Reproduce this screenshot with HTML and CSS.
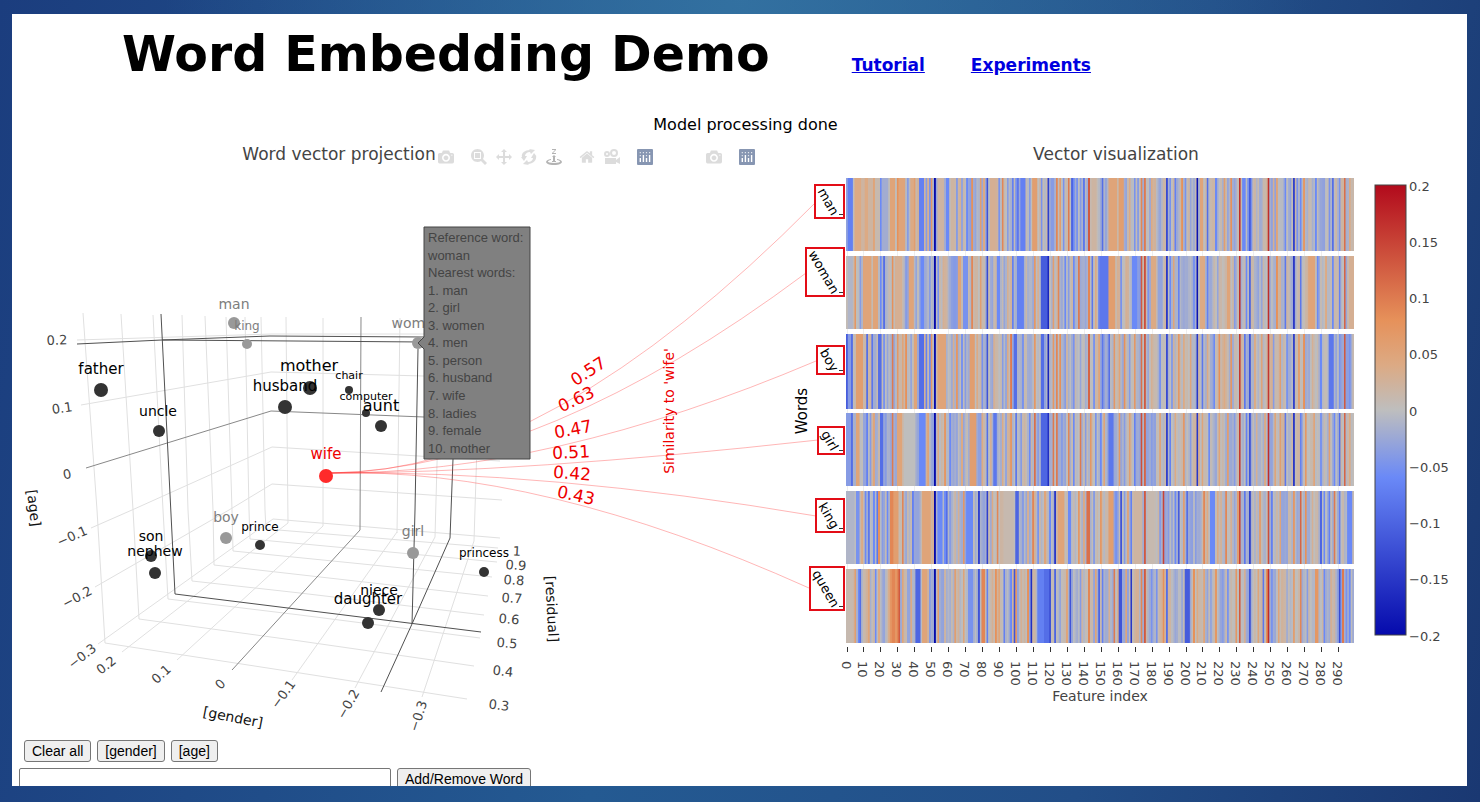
FILE: index.html
```html
<!DOCTYPE html>
<html lang="en">
<head>
<meta charset="utf-8">
<title>Word Embedding Demo</title>
<link rel="stylesheet" href="styles.css">
</head>
<body>
<main class="panel">
  <header class="header">
    <h1 class="title">Word Embedding Demo</h1>
    <nav class="nav">
      <a href="#tutorial">Tutorial</a>
      <a href="#experiments">Experiments</a>
    </nav>
  </header>
  <p class="status">Model processing done</p>

  <section class="stage">
    <svg class="plot" viewBox="12 138 1455 598" role="img" aria-label="Word vector projection and vector visualization">
      <defs>
        <linearGradient id="scale" x1="0" y1="1" x2="0" y2="0">
          <stop offset="0" stop-color="rgb(5,10,172)"/>
          <stop offset="0.35" stop-color="rgb(106,137,247)"/>
          <stop offset="0.5" stop-color="rgb(190,190,190)"/>
          <stop offset="0.6" stop-color="rgb(220,170,132)"/>
          <stop offset="0.7" stop-color="rgb(230,145,90)"/>
          <stop offset="1" stop-color="rgb(178,10,28)"/>
        </linearGradient>
      </defs>

      <text class="heading" x="339" y="160">Word vector projection</text>
      <text class="heading" x="1116" y="160">Vector visualization</text>

      <g class="grid">
        <path d="M83 313L97 510L105 643M121 314L133 510L139 619M153 315L163 510L168 599M182 315L188 510L192 581M205 316L213 510L214 565M226 317L232 510L233 551M245 317L249 510L250 539M261 317L265 510L266 529M286 317L288 523M323 318L323 526M400 318L397 533M441 318L435 537M481 318L474 541"/>
        <path d="M77 340L272 334L424 334M81 405L271 372L424 376M91 528L132 510L272 447L500 461M95 587L229 510L272 484L502 500M98 644L273 519L500 538"/>
        <path d="M105 643L300 673L467 699M139 619L300 641L474 666M168 599L300 615L480 638M192 581L300 593L484 615M214 565L488 596M233 551L492 577M250 539L497 562M266 529L498 548"/>
        <path d="M122 652L288 523M177 660L323 526M292 680L397 532M355 688L435 537M422 697L474 541"/>
      </g>
      <path class="zero" d="M86 468L271 411L424 417M361 317L360 530L232 670"/>
      <path class="axis" d="M161 314L175 594L481 632M77 344L162 340L270 336L424 337M162 340L424 342M418 349L415 510L412 624M453 459L450 538L412 624L381 692"/>

      <g class="tick" id="ticks3d"></g>
      <g class="name" id="axes3d"></g>
      <g id="points"></g>

      <g class="link">
        <path d="M331 473Q548 473 815 203"/>
        <path d="M331 473Q545 468 806 273"/>
        <path d="M331 473Q550 474 816 361"/>
        <path d="M331 473Q520 473 818 440"/>
        <path d="M331 473Q545 470 816 516"/>
        <path d="M331 473Q540 467 809 588"/>
      </g>
      <g id="scores"></g>
      <text class="score" transform="translate(674 411) rotate(-90)">Similarity to 'wife'</text>

      <g class="tip">
        <path d="M424 227H530V459H424V349L418 343L424 337Z"/>
        <text x="428" y="242">Reference word:</text>
        <text x="428" y="260">woman</text>
        <text x="428" y="277">Nearest words:</text>
        <text x="428" y="295">1. man</text>
        <text x="428" y="312">2. girl</text>
        <text x="428" y="330">3. women</text>
        <text x="428" y="347">4. men</text>
        <text x="428" y="365">5. person</text>
        <text x="428" y="382">6. husband</text>
        <text x="428" y="400">7. wife</text>
        <text x="428" y="418">8. ladies</text>
        <text x="428" y="435">9. female</text>
        <text x="428" y="453">10. mother</text>
      </g>

      <g id="heat"></g>
      <g id="labels"></g>
      <text class="words" transform="translate(807 411) rotate(-90)">Words</text>
      <text class="feature" x="1100" y="701">Feature index</text>
      <rect class="bar" x="1375" y="185" width="31" height="450"/>
      <g class="tick" id="barTicks"></g>
    </svg>

    <div class="modebar modebar-left">
      <div class="group"><button aria-label="Download plot"><svg viewBox="0 0 1000 1000"><use href="#camera"/></svg></button></div>
      <div class="group">
        <button aria-label="Zoom"><svg viewBox="0 0 1000 1000"><path transform="matrix(1 0 0 -1 0 850)" d="m1000-25l-250 251c40 63 63 138 63 218 0 224-182 406-407 406-224 0-406-182-406-406s183-406 407-406c80 0 155 22 218 62l250-250 125 125z m-812 250l0 438 437 0 0-438-437 0z m62 375l313 0 0-312-313 0 0 312z"/></svg></button>
        <button aria-label="Pan"><svg viewBox="0 0 1000 1000"><path transform="matrix(1 0 0 -1 0 850)" d="m1000 350l-187 188 0-125-250 0 0 250 125 0-188 187-187-187 125 0 0-250-250 0 0 125-188-188 186-187 0 125 252 0 0-250-125 0 187-188 188 188-125 0 0 250 250 0 0-126 187 188z"/></svg></button>
        <button aria-label="Orbital rotation"><svg viewBox="0 0 16 16"><path d="M1 8C0 4 4 1 9 1L8 0L14 1L10 5L9 3C6 3 4 5 4 7L6 7L3 12L0 8ZM15 7C16 11 12 15 7 15L8 16L2 15L6 11L7 13C10 13 12 11 12 9L10 9L13 4L16 8Z"/></svg></button>
        <button class="active" aria-label="Turntable rotation"><svg viewBox="0 0 16 16"><path d="M6 0H10V1L7 4H10V5H6V4L9 1H6ZM8 6L10 8H9V12H10V13H6V12H7V8H6ZM5 10V11C0 12 1 14 8 14S16 12 11 11V10C18 11 18 16 8 16S-2 11 5 10Z"/></svg></button>
      </div>
      <div class="group">
        <button aria-label="Reset camera"><svg viewBox="0 0 929 1000"><path transform="matrix(1 0 0 -1 0 850)" d="m786 296v-267q0-15-11-26t-25-10h-214v214h-143v-214h-214q-15 0-25 10t-11 26v267q0 1 0 2t0 2l321 264 321-264q1-1 1-4z m124 39l-34-41q-5-5-12-6h-2q-7 0-12 3l-386 322-386-322q-7-4-13-4-7 2-12 7l-35 41q-4 5-3 13t6 12l401 334q18 15 42 15t43-15l136-114v109q0 8 5 13t13 5h107q8 0 13-5t5-13v-227l122-102q5-5 6-12t-4-13z"/></svg></button>
        <button aria-label="Reset camera to last save"><svg viewBox="0 0 16 16"><path fill-rule="evenodd" d="M0 5A3 3 0 0 1 6 5A3 3 0 0 1 0 5ZM2 5A1 1 0 0 0 4 5A1 1 0 0 0 2 5ZM6 4A4 4 0 0 1 14 4A4 4 0 0 1 6 4ZM8 4A2 2 0 0 0 12 4A2 2 0 0 0 8 4ZM1 9H12V11L16 8V15L12 13V15H1Z"/></svg></button>
      </div>
      <div class="group"><button class="logo" aria-label="Produced with Plotly"><svg viewBox="0 0 16 16"><use href="#bars"/></svg></button></div>
    </div>
    <div class="modebar modebar-right">
      <div class="group"><button aria-label="Download heatmap"><svg viewBox="0 0 1000 1000"><use href="#camera"/></svg></button></div>
      <div class="group"><button class="logo" aria-label="Produced with Plotly"><svg viewBox="0 0 16 16"><use href="#bars"/></svg></button></div>
    </div>
    <svg class="symbols" aria-hidden="true">
      <defs>
        <path id="camera" transform="matrix(1 0 0 -1 0 850)" d="m500 450c-83 0-150-67-150-150 0-83 67-150 150-150 83 0 150 67 150 150 0 83-67 150-150 150z m400 150h-120c-16 0-34 13-39 29l-31 93c-6 15-23 28-40 28h-340c-16 0-34-13-39-28l-31-94c-6-15-23-28-40-28h-120c-55 0-100-45-100-100v-450c0-55 45-100 100-100h800c55 0 100 45 100 100v450c0 55-45 100-100 100z m-400-550c-138 0-250 112-250 250 0 138 112 250 250 250 138 0 250-112 250-250 0-138-112-250-250-250z m365 380c-19 0-35 16-35 35 0 19 16 35 35 35 19 0 35-16 35-35 0-19-16-35-35-35z"/>
        <g id="bars">
          <rect width="16" height="16" rx="1"/>
          <path fill="#fff" d="M2.600 9h1.400v4h-1.400zM5.700 6h1.400v7h-1.400zM8.800 9h1.400v4h-1.400zM11.900 6h1.400v7h-1.400z"/>
          <path fill="#fff" fill-opacity="0.75" d="M2.700 6h1.200v1.200h-1.200zM2.700 3h1.200v1.200h-1.200zM5.800 3h1.200v1.200h-1.200zM8.900 3h1.200v1.200h-1.200zM8.900 6h1.200v1.200h-1.200zM12 3h1.200v1.200h-1.200z"/>
        </g>
      </defs>
    </svg>
  </section>

  <div class="actions">
    <button class="btn">Clear all</button>
    <button class="btn">[gender]</button>
    <button class="btn">[age]</button>
  </div>
  <form class="entry">
    <input class="field" type="text" aria-label="Word">
    <button class="btn" type="button">Add/Remove Word</button>
  </form>
</main>
<script src="plot.js"></script>
</body>
</html>
```
FILE: styles.css
```css
* { box-sizing: border-box; }

body {
  margin: 0;
  height: 100vh;
  padding: 14px 13px 16px 12px;
  overflow: hidden;
  font-family: "DejaVu Sans", sans-serif;
  background:
    radial-gradient(ellipse at 50% 0, rgba(54, 118, 164, 0.8), rgba(40, 96, 150, 0) 55%),
    linear-gradient(100deg, #1b3d7e, #245a92 45%, #224e88 75%, #1a3872);
}

.panel {
  height: 100%;
  overflow: hidden;
  background: #fff;
}

.header {
  display: flex;
  align-items: baseline;
  gap: 82px;
  height: 100px;
  padding: 9px 0 0 110px;
}

.title {
  margin: 0;
  font-size: 49px;
  line-height: 64px;
  white-space: nowrap;
}

.nav {
  display: flex;
  gap: 46px;
  font-size: 17px;
  font-weight: bold;
}

.nav a { color: #0000e0; }

.status {
  margin: 0;
  padding-left: 12px;
  height: 24px;
  font-size: 16px;
  line-height: 22px;
  text-align: center;
}

.stage { position: relative; }

.plot {
  display: block;
  width: 100%;
  font-family: "DejaVu Sans", sans-serif;
}

.plot text { text-anchor: middle; }
.heading { font-size: 17px; fill: #444; }
.grid path { fill: none; stroke: #e0e0e0; }
.zero { fill: none; stroke: #888; }
.axis { fill: none; stroke: #505050; stroke-width: 1; }
.tick text { font-size: 13px; fill: #444; }
.name text { font-size: 14px; fill: #111; }
.link path { fill: none; stroke: #f33; stroke-opacity: 0.6; stroke-width: 0.6; }
.score { font-size: 14px; fill: #e00; }
.score-value { font-size: 17px; fill: #e00; }
.tip path { fill: #808080; stroke: #444; }
.plot .tip text { text-anchor: start; font-family: "Liberation Sans", Arial, sans-serif; font-size: 13px; fill: #444; }
.words { font-size: 15px; fill: #000; }
.feature { font-size: 14px; fill: #444; }
.bar { fill: url(#scale); stroke: #444; }
.frame { fill: #fff; stroke: #e30d17; stroke-width: 2; }
.row-label { font-size: 13px; fill: #000; }
.tick-x { font-size: 13px; fill: #444; }
.mark { stroke: #333; }
.guide { stroke: #eee; }
.plot .left { text-anchor: start; }

.modebar {
  position: absolute;
  top: 11px;
  display: flex;
  gap: 8px;
}

.modebar-left { left: 29%; }
.modebar-right { left: 47.4%; }
.group { display: flex; }

.modebar button {
  display: flex;
  justify-content: center;
  width: 25px;
  padding: 0;
  border: 0;
  background: none;
}

.modebar svg { width: 16px; height: 16px; fill: #444; opacity: 0.18; }
.modebar .active svg { opacity: 0.4; }
.modebar .logo svg { fill: #8796b2; opacity: 1; }
.symbols { position: absolute; width: 0; height: 0; }

.actions {
  display: flex;
  gap: 6px;
  padding: 4px 12px 6px;
}

.entry {
  display: flex;
  gap: 6px;
  padding-left: 7px;
}

.btn {
  height: 22px;
  padding: 0 7px;
  border: 1px solid #767676;
  border-radius: 3px;
  background: #efefef;
  color: #000;
  font: 14px/20px "Liberation Sans", Arial, sans-serif;
}

.field {
  width: 372px;
  height: 22px;
  border: 1px solid #767676;
  border-radius: 2px;
  background: #fff;
}
```
FILE: plot.js
```js
const NS = "http://www.w3.org/2000/svg";

function add(parent, tag, attrs, text) {
  const el = document.createElementNS(NS, tag);
  for (const key in attrs) el.setAttribute(key, attrs[key]);
  if (text !== undefined) el.textContent = text;
  document.getElementById(parent).appendChild(el);
}

function label(parent, text, x, y, angle, cls) {
  add(parent, "text", {
    transform: `translate(${x} ${y}) rotate(${angle})`,
    dy: "0.36em",
    class: cls || ""
  }, text);
}

// Axis ticks of the projection: text, x, y, angle.
[
  ["0.2", 57, 340, -2], ["0.1", 62, 408, -8], ["0", 67, 474, -12],
  ["−0.1", 72, 536, -24], ["−0.2", 77, 597, -28], ["−0.3", 82, 656, -38],
  ["0.2", 106, 665, -38], ["0.1", 161, 674, -42], ["0", 220, 684, -45],
  ["−0.1", 283, 694, -54], ["−0.2", 348, 704, -60], ["−0.3", 418, 716, -72],
  ["1", 517, 551, 3], ["0.9", 516, 565, 4], ["0.8", 514, 580, 4],
  ["0.7", 512, 598, 4], ["0.6", 509, 619, 5], ["0.5", 507, 643, 5],
  ["0.4", 503, 671, 6], ["0.3", 499, 705, 6]
].forEach(t => label("ticks3d", ...t));

label("axes3d", "[age]", 34, 508, 83);
label("axes3d", "[gender]", 233, 717, 11);
label("axes3d", "[residual]", 552, 609, 87);

// Words: text, text x, text y, font size, dot x, dot y, radius, dot colour, text colour.
const dark = "#333", gray = "#999", faint = "#7d7d7d";
[
  ["man", 234, 304, 14, 234, 323, 6, gray, faint],
  ["king", 247, 326, 12, 247, 344, 5, gray, faint],
  ["woman", 417, 323, 14, 418, 343, 6, gray, faint],
  ["boy", 226, 517, 14, 226, 538, 6, gray, faint],
  ["girl", 413, 531, 14, 413, 553, 6, gray, faint],
  ["father", 101, 369, 15, 101, 390, 7, dark, "#000"],
  ["uncle", 158, 411, 14, 159, 431, 6, dark, "#000"],
  ["mother", 309, 365, 16, 310, 388, 7, dark, "#000"],
  ["husband", 285, 386, 15, 285, 407, 7, dark, "#000"],
  ["chair", 349, 375, 11, 349, 390, 4, dark, "#000"],
  ["computer", 366, 396, 11, 366, 413, 4, dark, "#000"],
  ["aunt", 381, 405, 16, 381, 426, 6, dark, "#000"],
  ["wife", 326, 454, 15, 326, 476, 7, "#ff2a2a", "#e00"],
  ["son", 151, 536, 14, 151, 556, 6, dark, "#000"],
  ["nephew", 155, 551, 14, 155, 573, 6, dark, "#000"],
  ["prince", 260, 527, 12, 260, 545, 5, dark, "#000"],
  ["princess", 484, 553, 12, 484, 572, 5, dark, "#000"],
  ["niece", 379, 590, 14, 379, 610, 6, dark, "#000"],
  ["daughter", 368, 599, 15, 368, 623, 6, dark, "#000"]
].forEach(([text, x, y, size, cx, cy, r, dot, ink]) => {
  add("points", "circle", { cx, cy, r, fill: dot });
  add("points", "text", { x, y, dy: "0.36em", "font-size": size, fill: ink }, text);
});

[
  ["0.57", 588, 371, -33], ["0.63", 576, 399, -25], ["0.47", 573, 429, -11],
  ["0.51", 571, 452, -3], ["0.42", 572, 473, 4], ["0.43", 576, 495, 12]
].forEach(s => label("scores", ...s, "score-value"));

// Heatmap rows. Cells are "first-last:value", the value in hundredths.
const rows = [
  ["man", 178, 73, [815, 185, 29, 33], "1-3:-7 5-8:4 9-10:2 11-12:4 13-15:2 16:5 17-19:1 20:-6 21-24:-2 26-28:5 30:8 31-34:5 36:-4 38-39:4 40:6 43-45:-7 47:-4 49:-5 50:7 52:-20 54-57:2 59-60:-6 62-63:2 65:-4 68:-3 71:-6 74:8 76:-3 79:6 81:4 83:-12 85-87:3 90:-5 92:9 95:-4 98:-7 100:-5 101:-8 103-105:-7 108:-4 110-112:6 115:-5 119:-14 121:-4 124:9 126:6 128:-5 131:10 133:-10 134:-6 136:-5 138:-4 140:-8 143:13 145-147:2 151:-9 153:-3 155-159:5 161-163:6 165:-3 167:4 170:-5 172:-4 174:9 176:10 180:4 185:-3 189:-13 191:-5 194:-7 198:8 200:-5 203:-3 207:-19 209-210:5 213:-9 218:-6 223:6 225:-3 227:8 232:17 234-235:-6 237:-5 238:-11 239:-5 249:17 252:3 254:5 259:-6 264:-14 266:-5 268:-6 270:7 277:-6 285:-5 287:-9 291:-5 294:11 297:4"],
  ["woman", 256, 73, [806, 248, 38, 48], "1-3:-1 5:7 8:-4 10-14:5 16-18:5 20:-6 22:-9 27:8 29-32:3 35:-4 37-39:5 41:-3 44-45:-6 49:-4 52:-20 54:-5 57:3 63:-4 66-67:5 69-71:-5 74:9 76:2 79:6 83:-13 86:-3 89-90:-6 93:-3 95:3 98:-7 101-104:-7 108:-1 111:7 113:3 115-118:-11 119:-17 122:6 125:9 129:-6 131:-4 134:-6 137:10 143:9 145:-8 147:4 149:-7 150-154:-8 155-158:6 160:3 162:-5 165:3 169-171:-6 173:-4 174:13 176:14 178:-5 180-182:4 184-186:-3 189:-15 191:-6 193:5 196:-7 200:-2 205:-5 207:-19 209-211:4 213:-7 219:-3 225-226:5 229:-4 232:17 236:-6 238:-10 245:-3 249:17 254:8 259:-8 264:-15 268:-8 273-276:5 278:-6 283:4 287:-6 291:-7 294:12 297-299:3"],
  ["boy", 334, 75, [817, 346, 27, 28], "0:-11 1-2:-4 3:-9 6-9:6 12:-9 15:-8 17:-2 19-20:-9 22:-5 24:-3 27:10 30:7 33:5 35:8 38:-3 40-41:5 43-45:-9 47:-7 49:-6 50:7 52:-20 54-58:5 63:3 65:7 68:-5 70:-4 73-75:6 77:4 80:-5 83:-12 87:3 92:-4 95:4 97:10 99-100:-9 104:-5 107:-2 111:7 115-116:-9 119:-17 122:7 124:9 126:8 129:-4 134:-5 138:-3 143:12 146:-5 149:5 151:-8 155:-9 158:7 161:5 164:8 167:-4 170:7 174:11 176:13 180:3 185:-5 189:-13 192:-4 196:7 199:4 203:5 207:-15 210:-8 213:4 217:-6 220:8 223:4 227:7 232:16 235:-8 238:-12 241:4 245:5 249:16 252:-4 256:6 260:-5 264:-14 267:6 270:8 275:3 280:-6 285-287:-8 291:-5 294:13 297:-5"],
  ["girl", 413, 73, [818, 427, 26, 27], "0-2:-4 3:-9 6-7:5 10:-3 12:-7 14:-4 16:5 20-21:-9 23:-4 27:10 30-32:5 34-40:0 43-46:-6 48:5 52:-20 54:4 58:7 61:-6 65:-3 68:4 73-76:6 80:4 83:-9 85:3 87-88:-8 92:4 94:-3 97:7 100:-8 103:-4 105:2 108:-6 111:11 113:-4 115-118:-10 119:-16 122:10 124:10 127:-4 131:9 134:-6 138:10 141:-4 144:7 147:-5 150:-6 152:5 155-157:-8 161:7 164:-4 167:6 170:-7 174:14 176:12 180:-4 185:5 189:-14 191:-7 194:4 199:7 203:-4 207:-15 210:5 214:-6 220:5 225:6 229:-4 232:16 236:-7 238:-12 242:3 247:4 249:17 253:5 256:6 259:-8 264:-15 268:-7 271:7 276:5 280:-5 285:6 288:-6 291:-9 294:12 297:4"],
  ["king", 491, 73, [816, 499, 28, 33], "0-4:-1 6-7:-5 9:4 11:-6 13:-8 16:-6 18:-8 19:8 21:-4 24:-6 26-27:9 28-30:6 33:9 36:1 39:-7 42:-3 45-49:5 52:-20 54-56:-6 58:-6 59:-9 61:-4 66:3 69:7 71-74:-6 78:-14 81:-3 83:-14 86:4 89:9 93-98:1 100-101:-10 104:-4 107:3 110:9 113:-5 117:5 120:-6 123:-15 125-128:5 131-132:-6 137:7 140:4 142-143:11 146:-4 150:7 155-157:6 159:-5 162:-12 164:-4 166:5 168:-7 170-174:2 176:13 178-181:1 185:-4 187:15 190:-4 194:-6 196:-11 199:6 201:-9 206:-4 211:9 213:4 215-217:-6 219:4 224:9 227:3 231:6 232:15 235:-8 238:-14 244:6 249:14 251:-7 256:5 260:-3 264:7 268:12 271:8 275:3 280:-10 282:-6 285:-7 288:10 291:-7 296-298:-6"],
  ["queen", 569, 74, [810, 567, 34, 43], "0-3:1 5:6 7:-6 8:-9 10:1 13:5 17:-6 19:4 22:-3 25:4 26:7 27-28:9 29:7 30:9 31:13 33:5 36:-3 38:4 41-43:-10 45-47:5 49:-4 52:-20 54:6 58:2 64:6 69:5 72-74:-5 78:-12 80-81:9 83:-7 86:3 88:8 90:5 93:-7 97:-6 99:-12 100:7 103:3 107:8 109:-16 111:2 113-116:-7 117-119:-9 120:-12 123:-10 126:-3 130:5 132:-12 136:-2 138:-4 143:9 146:-3 147:5 149:-10 151:-7 155:3 158:10 160:3 161-162:-12 165:5 168:-15 171:3 174:9 176:13 180:-5 183:-5 187:8 189:-9 195:-2 200-202:-11 205:8 207:4 211:5 215:-3 218:7 222:-4 225:-5 230:7 232:13 235:3 238:-12 243:5 246:-8 248:8 249:17 251:-5 255:5 260:-2 264:6 268:9 272:-4 277-278:7 282:-6 286:3 291:-13 293:10 295:-5 297:-6"]
];

const stops = [
  [0, 5, 10, 172], [0.35, 106, 137, 247], [0.5, 190, 190, 190],
  [0.6, 220, 170, 132], [0.7, 230, 145, 90], [1, 178, 10, 28]
];

function colour(value) {
  const t = Math.min(1, Math.max(0, (value + 20) / 40));
  let i = 1;
  while (t > stops[i][0]) i++;
  const a = stops[i - 1], b = stops[i], f = (t - a[0]) / (b[0] - a[0]);
  return `rgb(${[1, 2, 3].map(k => Math.round(a[k] + (b[k] - a[k]) * f)).join()})`;
}

let seed = 11;
function noise() {
  seed = (seed * 16807) % 2147483647;
  return seed / 2147483647;
}

const left = 846, step = 508.5 / 300;

for (let n = 0; n < 300; n += 10) {
  const x = Math.round(left + 0.5 + n * step) + 0.5;
  add("heat", "line", { x1: x, x2: x, y1: 178, y2: 642, class: "guide" });
  add("heat", "line", { x1: x, x2: x, y1: 647, y2: 652, class: "mark" });
  label("labels", String(n), x - 1, 661, 90, "tick-x left");
}

// Each row is one smooth gradient with a flat stretch per cell.
rows.forEach(([word, y, height, box, cells], row) => {
  const values = Array.from({ length: 300 }, () => (noise() - 0.55) * 6);
  for (let n = 1; n < 300; n++) values[n] = (values[n] * 2 + values[n - 1]) / 3 * 1.2;
  cells.split(" ").forEach(cell => {
    const [range, value] = cell.split(":");
    const [first, last = first] = range.split("-");
    for (let n = +first; n <= +last; n++) values[n] = +value;
  });
  add("heat", "linearGradient", { id: "row" + row });
  values.forEach((value, n) => {
    const fill = colour(value);
    add("row" + row, "stop", { offset: (n + 0.2) / 300, "stop-color": fill });
    add("row" + row, "stop", { offset: (n + 0.8) / 300, "stop-color": fill });
  });
  add("heat", "rect", { x: left, y, width: 508, height, fill: `url(#row${row})` });
  const [bx, by, w, h] = box;
  add("labels", "rect", { x: bx, y: by, width: w, height: h, class: "frame" });
  label("labels", word, bx + w / 2 - 1, by + h / 2, 60, "row-label");
  add("labels", "line", { x1: 839, x2: 843, y1: by + h - 3.5, y2: by + h - 3.5, class: "mark" });
});

["0.2", "0.15", "0.1", "0.05", "0", "−0.05", "−0.1", "−0.15", "−0.2"].forEach((t, i) => {
  label("barTicks", t, 1409, 186 + i * 56.25, 0, "left");
});
```
